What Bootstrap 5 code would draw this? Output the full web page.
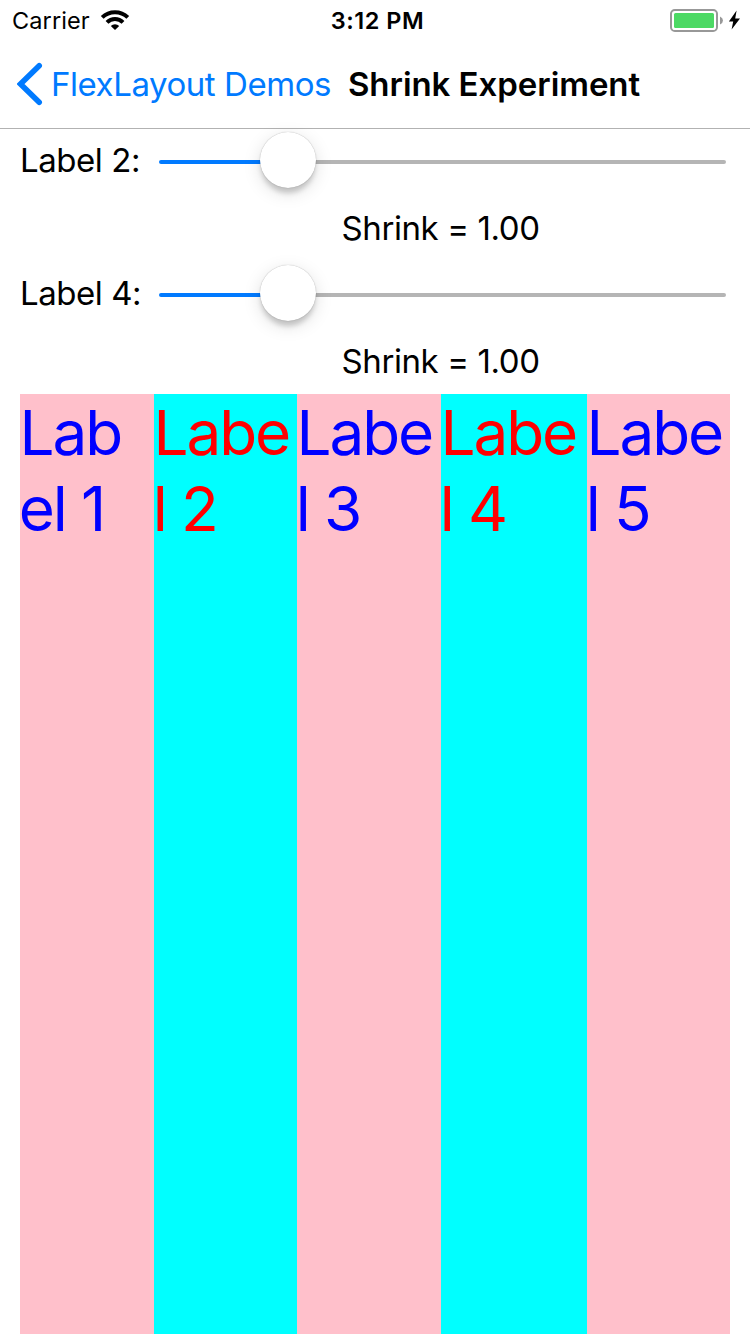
<!DOCTYPE html>
<html lang="en">
<head>
<meta charset="utf-8">
<meta name="viewport" content="width=device-width, initial-scale=1">
<title>Shrink Experiment</title>
<link href="https://cdn.jsdelivr.net/npm/bootstrap@5.3.0/dist/css/bootstrap.min.css" rel="stylesheet">
<style>
  body { font-family: Inter, "Liberation Sans", sans-serif; font-size: 33px; color: #000; background: #fff; }
  .status-bar { height: 41px; font-size: 23.5px; line-height: 41px; padding: 0 9px 0 12px; }
  .status-side { flex: 1 1 0; }
  .carrier { letter-spacing: .1px; }
  .wifi { margin-left: 10px; margin-bottom: 1px; }
  .clock { font-weight: 600; font-size: 23.5px; letter-spacing: .5px; margin-right: -2px; }
  .title-bar { height: 88px; border-bottom: 1px solid #b2b2b2; padding: 0 18px 1px 17px; line-height: 86px; }
  .back-link { color: #007aff; }
  .back-text { letter-spacing: -.45px; }
  .page-title { font-weight: 600; margin-left: 17px; letter-spacing: -.05px; }
  .control-group { height: 132px; padding: 0 24px 0 20px; }
  .first-group { margin-bottom: 1px; }
  .control-row { height: 62px; }
  .control-label { width: 139px; line-height: 62px; letter-spacing: -.45px; }
  .value-label { margin-top: 3px; line-height: 68px; padding-left: 321.5px; letter-spacing: -.4px; }
  .ios-range { height: 62px; padding-top: 4px; width: 567px; }
  .ios-range::-webkit-slider-runnable-track { height: 4px; border-radius: 2px; background: linear-gradient(to right, #007aff 129px, #b5b5b5 129px); }
  .ios-range::-webkit-slider-thumb { width: 56px; height: 56px; margin-top: -28px; background: #fff; border: 0; border-radius: 50%; box-shadow: 0 0 1px rgba(0,0,0,.35), 0 6px 5px -1px rgba(0,0,0,.17), 0 5px 18px rgba(0,0,0,.13); }
  .stage { padding: 0 20px; }
  .demo-label { font-size: 62px; line-height: 76px; padding-top: 1px; letter-spacing: -2.1px; text-indent: -.5px; }
  .rest { margin-left: -1.3px; }
  .pink { background: #ffc0cb; color: #00f; }
  .aqua { background: #0ff; color: #f00; }
</style>
</head>
<body class="vh-100 d-flex flex-column overflow-hidden">
  <header class="flex-shrink-0">
    <div class="status-bar d-flex align-items-center">
      <div class="status-side d-flex align-items-center">
        <span class="carrier">Carrier</span>
        <svg class="wifi" width="30" height="21" viewBox="100 10 30 21" aria-hidden="true">
          <g fill="none" stroke="#000" stroke-width="4">
            <path d="M102.2 17.4A18.4 18.4 0 0 1 127.8 17.4"/>
            <path d="M107 22.4A11.4 11.4 0 0 1 123 22.4"/>
          </g>
          <path d="M115 30L110.8 26A6 6 0 0 1 119.2 26Z"/>
        </svg>
      </div>
      <span class="clock">3:12 PM</span>
      <div class="status-side d-flex align-items-center justify-content-end">
        <svg width="72" height="27" viewBox="669 7 72 27" aria-hidden="true">
          <rect x="671" y="10" width="46" height="21" rx="3.8" fill="#fff" stroke="#989898" stroke-width="2"/>
          <rect x="674" y="13" width="40" height="15" rx="1.5" fill="#4cd964"/>
          <path d="M720 16.5Q723 17.8 723 20.5T720 24.5Z" fill="#989898"/>
          <path d="M736.6 10.5L728.9 21.5H733.2L731.6 29.4L740 18.4H735.2Z"/>
        </svg>
      </div>
    </div>
    <nav class="title-bar d-flex align-items-center" aria-label="Navigation">
      <a class="back-link d-flex align-items-center text-decoration-none" href="#">
        <svg width="34" height="44" viewBox="17 62 34 44" aria-hidden="true"><path d="M39.2 65.8L20.5 84L39.2 102.2" fill="none" stroke="#007aff" stroke-width="5.6" stroke-linecap="round"/></svg>
        <span class="back-text">FlexLayout Demos</span>
      </a>
      <span class="page-title text-nowrap">Shrink Experiment</span>
    </nav>
  </header>
  <main class="flex-grow-1 d-flex flex-column">
    <section class="flex-shrink-0">
      <div class="control-group first-group">
        <div class="control-row d-flex">
          <label class="control-label flex-shrink-0" for="shrink2">Label 2:</label>
          <input class="form-range ios-range" id="shrink2" type="range" min="0" max="511" value="101">
        </div>
        <div class="value-label text-nowrap">Shrink = 1.00</div>
      </div>
      <div class="control-group">
        <div class="control-row d-flex">
          <label class="control-label flex-shrink-0" for="shrink4">Label 4:</label>
          <input class="form-range ios-range" id="shrink4" type="range" min="0" max="511" value="101">
        </div>
        <div class="value-label text-nowrap">Shrink = 1.00</div>
      </div>
    </section>
    <section class="stage flex-grow-1 d-flex">
      <div class="demo-label pink" style="width:134px">Lab<br><span class="rest">el 1</span></div>
      <div class="demo-label aqua" style="width:143px">Labe<br><span class="rest">l 2</span></div>
      <div class="demo-label pink" style="width:144px">Labe<br><span class="rest">l 3</span></div>
      <div class="demo-label aqua" style="width:146px">Labe<br><span class="rest">l 4</span></div>
      <div class="demo-label pink" style="width:143px">Labe<br><span class="rest">l 5</span></div>
    </section>
  </main>
<script src="https://cdn.jsdelivr.net/npm/bootstrap@5.3.0/dist/js/bootstrap.bundle.min.js"></script>
</body>
</html>
